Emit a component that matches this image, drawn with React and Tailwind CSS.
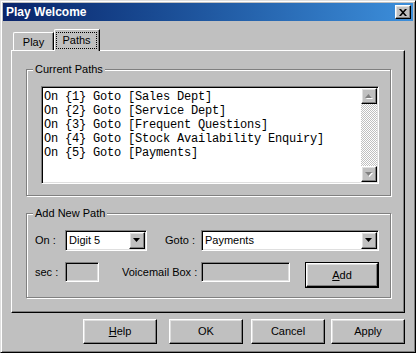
const raised =
  "border border-t-white border-l-white border-r-black border-b-black shadow-[inset_-1px_-1px_0_#808080,inset_1px_1px_0_#dfdfdf]";
const sunken =
  "border border-t-[#808080] border-l-[#808080] border-r-white border-b-white shadow-[inset_1px_1px_0_#000,inset_-1px_-1px_0_#dfdfdf]";

const paths = [
  "On {1} Goto [Sales Dept]",
  "On {2} Goto [Service Dept]",
  "On {3} Goto [Frequent Questions]",
  "On {4} Goto [Stock Availability Enquiry]",
  "On {5} Goto [Payments]",
];

const Arrow = ({ down, disabled }) => (
  <svg width="8" height="5" viewBox="0 0 8 5">
    {disabled && (
      <polygon
        points={down ? "1,1 8,1 4.5,5" : "4.5,1 8,5 1,5"}
        fill="#fff"
      />
    )}
    <polygon
      points={down ? "0,0 7,0 3.5,4" : "3.5,0 7,4 0,4"}
      fill={disabled ? "#808080" : "#000"}
    />
  </svg>
);

const Combo = ({ value, width }) => (
  <div className={`${sunken} ${width} h-[21px] bg-white flex items-center p-[1px]`}>
    <span className="flex-1 pl-[2px] leading-none">{value}</span>
    <div className={`${raised} w-[16px] h-[17px] bg-[#c0c0c0] flex items-center justify-center`}>
      <Arrow down />
    </div>
  </div>
);

const Group = ({ label, height, children }) => (
  <div
    className={`relative w-[365px] ${height} border border-[#808080] shadow-[inset_1px_1px_0_#fff,1px_1px_0_#fff]`}
  >
    <span className="absolute left-[6px] top-[-8px] px-[2px] bg-[#c0c0c0] leading-[14px]">
      {label}
    </span>
    {children}
  </div>
);

const Button = ({ children, className = "" }) => (
  <button className={`${raised} w-[74px] h-[25px] bg-[#c0c0c0] flex items-center justify-center ${className}`}>
    {children}
  </button>
);

export default function App() {
  return (
    <div className="w-[416px] h-[353px] bg-[#c0c0c0] border border-t-[#dfdfdf] border-l-[#dfdfdf] border-r-black border-b-black shadow-[inset_1px_1px_0_#fff,inset_-1px_-1px_0_#808080] p-[2px] font-['Liberation_Sans',Arial,sans-serif] text-[11px] text-black">
      <div className="h-[18px] flex items-center justify-between bg-linear-to-r from-[#0a246a] to-[#3d8fdb] pl-[3px] pr-[2px]">
        <span className="text-white font-bold text-[12px] leading-none">Play Welcome</span>
        <div className={`${raised} w-[16px] h-[14px] bg-[#c0c0c0] flex items-center justify-center`}>
          <svg width="8" height="7" viewBox="0 0 8 7">
            <path d="M0 0h2l2 2.2L6 0h2L5 3.5 8 7H6L4 4.8 2 7H0l3-3.5z" fill="#000" />
          </svg>
        </div>
      </div>

      <div className="ml-[8px] mt-[8px] w-[394px]">
        <div className="flex items-end h-[21px] pl-[2px]">
          <div className="w-[41px] h-[18px] border-t border-l border-white border-r border-r-black shadow-[inset_-1px_0_0_#808080] rounded-tl-[2px] flex items-center justify-center pt-[1px]">
            Play
          </div>
          <div className="relative z-10 -mb-px w-[46px] h-[22px] bg-[#c0c0c0] border-t border-l border-white border-r border-r-black shadow-[inset_-1px_0_0_#808080] rounded-tl-[2px] pt-[2px] pl-[1px] pr-[2px]">
            <div className="h-[17px] border border-dotted border-black flex items-center justify-center">
              Paths
            </div>
          </div>
        </div>

        <div className="h-[263px] border border-t-white border-l-white border-r-black border-b-black shadow-[inset_-1px_-1px_0_#808080] pl-[14px] pt-[18px]">
          <Group label="Current Paths" height="h-[127px]">
            <div className={`${sunken} ml-[14px] mt-[16px] w-[338px] h-[98px] bg-white flex p-[1px]`}>
              <div className="flex-1 pl-[1px] pt-[2px] font-['Liberation_Mono','Courier_New',monospace] text-[12px] tracking-[-0.2px] leading-[14px] whitespace-pre">
                {paths.map((p) => (
                  <div key={p}>{p}</div>
                ))}
              </div>
              <div className="w-[16px] flex flex-col bg-[image:repeating-conic-gradient(#c0c0c0_0%_25%,#ffffff_0%_50%)] bg-[length:2px_2px]">
                <div className={`${raised} h-[16px] bg-[#c0c0c0] flex items-center justify-center`}>
                  <Arrow disabled />
                </div>
                <div className="flex-1" />
                <div className={`${raised} h-[16px] bg-[#c0c0c0] flex items-center justify-center`}>
                  <Arrow down disabled />
                </div>
              </div>
            </div>
          </Group>

          <div className="mt-[17px]">
            <Group label="Add New Path" height="h-[85px]">
              <div className="pl-[8px] pt-[16px]">
                <div className="flex items-center">
                  <span className="w-[30px]">On :</span>
                  <Combo value="Digit 5" width="w-[82px]" />
                  <span className="ml-[18px] w-[36px]">Goto :</span>
                  <Combo value="Payments" width="w-[178px]" />
                </div>
                <div className="flex items-start mt-[11px]">
                  <span className="w-[30px] h-[20px] flex items-center">sec :</span>
                  <div className={`${sunken} w-[34px] h-[20px]`} />
                  <span className="ml-[23px] w-[79px] h-[20px] flex items-center">Voicemail Box :</span>
                  <div className={`${sunken} w-[89px] h-[20px]`} />
                  <div className="ml-[15px] w-[74px] h-[26px] border border-black">
                    <div className={`${raised} w-full h-full bg-[#c0c0c0] flex items-center justify-center`}>
                      <span><u>A</u>dd</span>
                    </div>
                  </div>
                </div>
              </div>
            </Group>
          </div>
        </div>
      </div>

      <div className="flex mt-[6px] ml-[80px]">
        <Button><span><u>H</u>elp</span></Button>
        <Button className="ml-[12px]">OK</Button>
        <Button className="ml-[8px]">Cancel</Button>
        <Button className="ml-[6px]">Apply</Button>
      </div>
    </div>
  );
}
